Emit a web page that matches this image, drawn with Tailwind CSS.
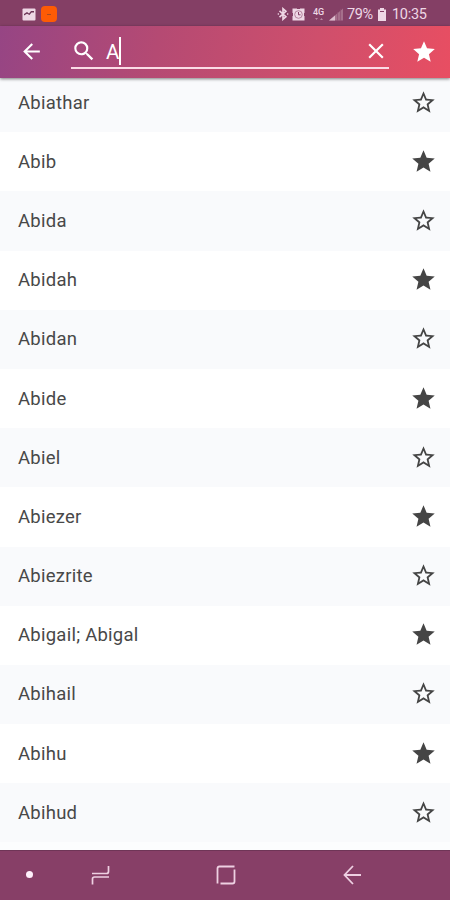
<!DOCTYPE html>
<html lang="en">
<head>
  <meta charset="UTF-8" />
  <meta name="viewport" content="width=device-width, initial-scale=1.0"/>
  <title>Name Search</title>
  <script src="https://cdn.jsdelivr.net/npm/@tailwindcss/browser@4"></script>
</head>
<body class="bg-white font-[Roboto,sans-serif]">
  <div class="w-[450px] h-[900px] flex flex-col overflow-hidden">

    <!-- Status bar -->
    <div class="h-[26px] shrink-0 bg-[#843f65] flex items-center justify-between pl-[22px] pr-[23px] pt-[2px] text-[#eed7e5]">
      <div class="flex items-center gap-[5px]">
        <svg class="w-[14px] h-[13px]" viewBox="0 0 14 13">
          <rect x="0.5" y="0.5" width="13" height="12" rx="1" fill="#eed7e5"/>
          <path d="M2 7.5V6l3-2 2 1.500L9 3h3v1.500H9.500L7.500 7 5 5.800z" fill="#6d3557"/>
        </svg>
        <div class="w-4 h-4 rounded-[4px] bg-[#fd5b05] flex items-center justify-center">
          <div class="w-1 h-px bg-[#a94b1d]"></div>
        </div>
      </div>
      <div class="flex items-center">
        <svg class="w-[14px] h-[14px] mr-[2px]" viewBox="0 0 24 24" fill="none" stroke="currentColor" stroke-width="2.8">
          <path d="M6 6.500l11 10L12 21V3l5 4.500-11 10M3 12h2M19 12h2"/>
        </svg>
        <svg class="w-[13px] h-[13px] mr-[8px]" viewBox="0 0 13 13">
          <path d="M0.500 0.500h12v12h-12z" fill="#eed7e5"/>
          <path d="M5 0h3v1H5zM0 5h1v3H0zM12 5h1v3h-1z" fill="#843f65"/>
          <circle cx="6.500" cy="6.500" r="3.800" fill="none" stroke="#a56f8b" stroke-width="0.8"/>
          <path d="M6.500 4v2.800h2" fill="none" stroke="#843f65"/>
        </svg>
        <div class="w-[11px] h-[13px] mr-[5px] flex flex-col items-center">
          <span class="text-[9px] leading-[9px] font-medium">4G</span>
          <svg class="w-[10px] h-[4px]" viewBox="0 0 10 4"><path d="M1 1l1.500 2L4 1zM6 3l1.500-2L9 3z" fill="#b687a0"/></svg>
        </div>
        <svg class="w-[14px] h-[13px] mr-[4px]" viewBox="0 0 14 13">
          <path d="M0 12.500L14 0.500V12.500z" fill="#a56f8b"/>
          <path d="M0 12.500L6 7.400V12.500z" fill="#dcbccd"/>
          <path d="M8.500 4v9M11.500 1v12" stroke="#8f4f73" stroke-width="0.7"/>
        </svg>
        <span class="text-[14.500px] leading-[18px] pt-[2px] w-[27px] tracking-[-0.4px] whitespace-nowrap">79%</span>
        <svg class="w-[10px] h-[13px] mr-[5px] ml-[3px]" viewBox="0 0 10 13">
          <path d="M3 0h4v1.500h2V13H1V1.500h2z" fill="#eed7e5"/>
          <path d="M3 3.500h4" stroke="#843f65"/>
        </svg>
        <span class="text-[14.500px] leading-[18px] pt-[2px] w-[35px] tracking-[-0.3px] whitespace-nowrap">10:35</span>
      </div>
    </div>

    <!-- Search header -->
    <header class="relative z-10 h-[52px] shrink-0 flex items-center pl-[19px] pr-[13px] text-white bg-linear-[100deg,#964584,#b54a73_35%,#cf4f6c_70%,#e84e62] shadow-[0_1px_3px_rgba(0,0,0,0.5)]">
      <svg class="w-[25px] h-[25px] -mt-px" viewBox="0 0 24 24" fill="currentColor">
        <path d="M20 11H7.83l5.59-5.59L12 4l-8 8 8 8 1.41-1.41L7.83 13H20v-2z"/>
      </svg>
      <div class="ml-[27px] w-[318px] h-[34px] flex items-center border-b-2 border-[#fbdce6]">
        <svg class="w-[26px] h-[26px]" viewBox="0 0 24 24" fill="currentColor">
          <path d="M15.5 14h-.79l-.28-.27A6.471 6.471 0 0 0 16 9.5 6.5 6.5 0 1 0 9.5 16c1.61 0 3.09-.59 4.23-1.57l.27.28v.79l5 4.99L20.49 19l-4.99-5zm-6 0C7.01 14 5 11.99 5 9.5S7.01 5 9.5 5 14 7.01 14 9.5 11.99 14 9.5 14z"/>
        </svg>
        <span class="ml-[9px] mt-[2px] text-[20.500px] leading-7">A</span>
        <span class="w-[2px] h-[28px] bg-white"></span>
        <svg class="w-[26px] h-[26px] ml-auto" viewBox="0 0 24 24" fill="currentColor">
          <path d="M19 6.41L17.59 5 12 10.59 6.41 5 5 6.41 10.59 12 5 17.59 6.41 19 12 13.41 17.59 19 19 17.59 13.41 12z"/>
        </svg>
      </div>
      <svg class="w-[26px] h-[26px] ml-auto -mt-px" viewBox="0 0 24 24" fill="currentColor">
        <path d="M12 17.27L18.18 21l-1.64-7.03L22 9.24l-7.19-.61L12 2 9.19 8.63 2 9.24l5.46 4.73L5.82 21z"/>
      </svg>
    </header>

    <!-- Results, first row is partly scrolled under the header -->
    <main class="flex-1 min-h-0 overflow-hidden bg-[#fcfdfe]">
      <ul id="names" class="-mt-[5px]"></ul>
    </main>

    <!-- Navigation bar -->
    <nav class="h-[50px] shrink-0 bg-[#873f67] border-t border-[#6f3557] flex items-center pl-[26px] pb-[2px] text-[#eed0e2]">
      <div class="w-[7px] h-[7px] rounded-full bg-[#fff0fb]"></div>
      <svg class="w-[20px] h-[20px] ml-[58px]" viewBox="0 0 20 20" fill="none" stroke="currentColor" stroke-width="1.7">
        <path d="M1 8.500h14.500q2 0 2-2V1M18 12H3.500q-2 0-2 2v5.500"/>
      </svg>
      <svg class="w-[20px] h-[20px] ml-[105px]" viewBox="0 0 20 20" fill="none" stroke="currentColor" stroke-width="1.8">
        <path d="M1.500 18.500V3.500q0-2 2-2H18.500M18.500 4.500V16.500q0 2-2 2H4.500"/>
      </svg>
      <svg class="w-[18px] h-[20px] ml-[107px]" viewBox="0 0 18 20" fill="none" stroke="currentColor" stroke-width="1.8">
        <path d="M18 10H1.500M10 1L1.500 10l8.500 9"/>
      </svg>
    </nav>
  </div>

  <script>
    const names = [
      "Abiathar", "Abib", "Abida", "Abidah", "Abidan", "Abide", "Abiel",
      "Abiezer", "Abiezrite", "Abigail; Abigal", "Abihail", "Abihu", "Abihud"
    ];
    const star = "M12 17.27L18.18 21l-1.64-7.03L22 9.24l-7.19-.61L12 2 9.19 8.63 2 9.24l5.46 4.73L5.82 21z";
    const starBorder = "M22 9.24l-7.19-.62L12 2 9.19 8.63 2 9.24l5.46 4.73L5.82 21 12 17.27 18.18 21l-1.63-7.03L22 9.24zM12 15.4l-3.76 2.27 1-4.28-3.32-2.88 4.38-.38L12 6.1l1.71 4.04 4.38.38-3.32 2.88 1 4.28L12 15.4z";

    const list = document.getElementById("names");
    names.forEach((name, i) => {
      const saved = i % 2 === 1;
      const row = document.createElement("li");
      row.className = "h-[59.2px] flex items-center justify-between pl-[18px] pr-[13.500px] odd:bg-[#f9fafc] even:bg-white";
      row.innerHTML = `
        <span class="text-[18.500px] leading-6 tracking-[0.25px] text-[#484848]">${name}</span>
        <svg class="w-[27px] h-[27px] -mt-px text-[#454545]" viewBox="0 0 24 24" fill="currentColor"><path d="${saved ? star : starBorder}"/></svg>
      `;
      list.appendChild(row);
    });
  </script>
</body>
</html>
